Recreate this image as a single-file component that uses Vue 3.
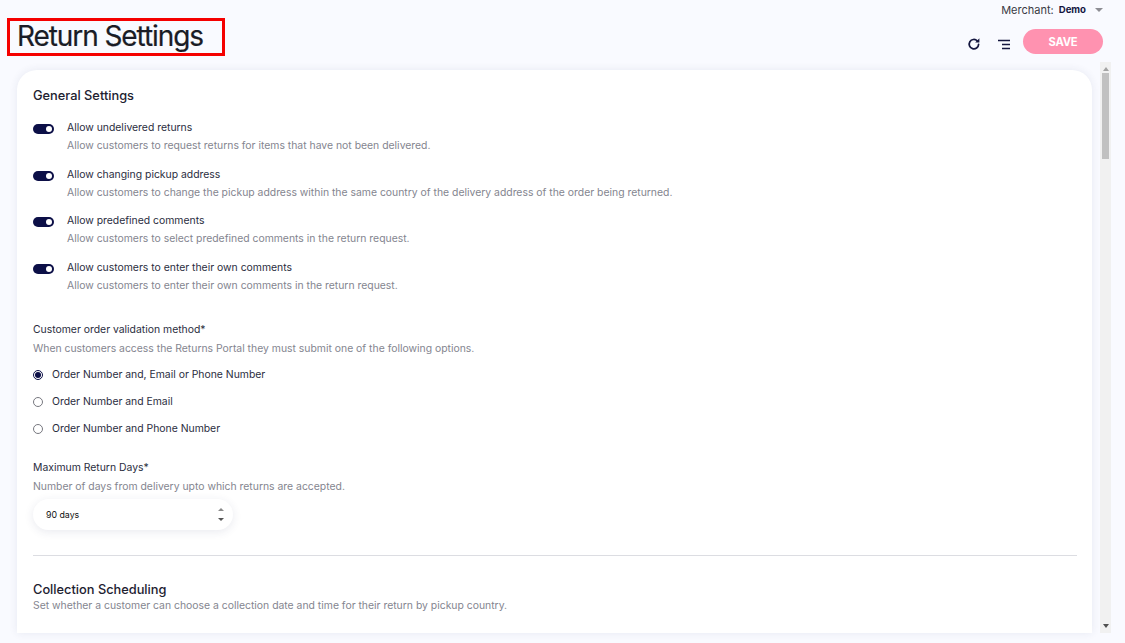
<script setup>
const toggles = [
  ['Allow undelivered returns', 'Allow customers to request returns for items that have not been delivered.'],
  ['Allow changing pickup address', 'Allow customers to change the pickup address within the same country of the delivery address of the order being returned.'],
  ['Allow predefined comments', 'Allow customers to select predefined comments in the return request.'],
  ['Allow customers to enter their own comments', 'Allow customers to enter their own comments in the return request.'],
]
const radios = [
  { label: 'Order Number and, Email or Phone Number', on: true },
  { label: 'Order Number and Email', on: false },
  { label: 'Order Number and Phone Number', on: false },
]
</script>

<template>
  <div class="page">
    <header class="top">
      <div class="title-box"><h1>Return Settings</h1></div>
      <div class="top-right">
        <div class="merchant">
          <span class="m-label">Merchant:</span>
          <span class="m-name">Demo</span>
          <span class="m-caret"></span>
        </div>
        <div class="actions">
          <svg class="ic" width="14" height="14" viewBox="0 0 14 14" fill="none">
            <path d="M11.6 7.4a4.7 4.7 0 1 1-1.4-3.6" stroke="#14163f" stroke-width="1.7" stroke-linecap="round"/>
            <path d="M12.4 1.2v4.2H8.2z" fill="#14163f"/>
          </svg>
          <svg class="menu" width="12" height="11" viewBox="0 0 12 11" fill="none">
            <path d="M0 1.5h12M4 5.5h8M4 9.5h8" stroke="#14163f" stroke-width="1.3"/>
          </svg>
          <button class="save">SAVE</button>
        </div>
      </div>
    </header>

    <div class="body">
      <main class="card">
        <h2 class="h-general">General Settings</h2>
        <div class="toggles">
          <div v-for="t in toggles" :key="t[0]" class="toggle-row">
            <span class="switch"><span class="knob"></span></span>
            <div>
              <div class="lbl">{{ t[0] }}</div>
              <div class="hint t-hint">{{ t[1] }}</div>
            </div>
          </div>
        </div>

        <div class="lbl field-a">Customer order validation method*</div>
        <div class="hint f-hint">When customers access the Returns Portal they must submit one of the following options.</div>
        <div class="radios">
          <div v-for="r in radios" :key="r.label" class="radio-row">
            <span class="radio" :class="{ on: r.on }"></span>
            <span class="lbl">{{ r.label }}</span>
          </div>
        </div>

        <div class="lbl field-b">Maximum Return Days*</div>
        <div class="hint f-hint">Number of days from delivery upto which returns are accepted.</div>
        <div class="select">
          <span>90 days</span>
          <span class="spin"><i class="up"></i><i class="down"></i></span>
        </div>

        <hr class="rule" />

        <h2 class="h-coll">Collection Scheduling</h2>
        <div class="hint">Set whether a customer can choose a collection date and time for their return by pickup country.</div>
      </main>

      <div class="scrollbar">
        <span class="arr up"></span>
        <span class="thumb"></span>
        <span class="fill"></span>
        <span class="arr down"></span>
      </div>
    </div>
  </div>
</template>

<style>
html, body { margin: 0; background: #f9faff; }
</style>

<style scoped>
.page {
  width: 1125px;
  height: 643px;
  overflow: hidden;
  background: #f9faff;
  font-family: Inter, "Liberation Sans", sans-serif;
  color: #1f2233;
  box-sizing: border-box;
}
.top {
  height: 62px;
  display: flex;
  justify-content: space-between;
  padding: 0 22px 0 7px;
  box-sizing: border-box;
}
.title-box {
  margin-top: 18px;
  width: 218px;
  height: 38px;
  border: 3px solid #f50000;
  box-sizing: border-box;
  padding: 0 0 3px 7px;
  display: flex;
  align-items: center;
}
h1 {
  margin: 0;
  font-size: 28px;
  font-weight: 400;
  letter-spacing: -1.08px;
  color: #1a1c26;
  line-height: 30px;
  -webkit-text-stroke: 0.2px #1a1c26;
}
.top-right { display: flex; flex-direction: column; align-items: flex-end; }
.merchant {
  display: flex;
  align-items: center;
  height: 20px;
  font-size: 11px;
}
.m-label { color: #3a3a44; }
.m-name { font-weight: 700; font-size: 9.6px; color: #14163f; margin-left: 5px; position: relative; top: -1px; }
.m-caret {
  width: 0; height: 0;
  margin-left: 9px;
  margin-top: -1px;
  border-left: 4px solid transparent;
  border-right: 4px solid transparent;
  border-top: 4px solid #8d8d94;
}
.actions { display: flex; align-items: center; margin-top: 9px; }
.ic { margin-top: 4px; }
.menu { margin: 6px 0 0 17px; }
.save {
  margin-left: 13px;
  width: 80px;
  height: 25px;
  border: none;
  border-radius: 13px;
  background: #ff92b0;
  color: #fff;
  font-family: inherit;
  font-size: 11.2px;
  font-weight: 700;
  letter-spacing: -0.2px;
  padding: 0;
}
.body { display: flex; height: 571px; padding-left: 17px; }
.card {
  width: 1075px;
  height: 563px;
  margin-top: 8px;
  flex: none;
  background: #fff;
  border-radius: 20px 20px 0 0;
  box-shadow: 0 0 8px rgba(40, 50, 100, 0.09);
  padding: 17px 15px 0 16px;
  box-sizing: border-box;
  overflow: hidden;
}
h2 {
  margin: 0;
  font-weight: 500;
  font-size: 12.8px;
  color: #1d2130;
  line-height: 18px;
}
.toggles { margin-top: 15px; }
.toggle-row { display: flex; height: 46.5px; }
.switch {
  width: 21px;
  height: 10px;
  margin-top: 4px;
  margin-right: 13px;
  border-radius: 5px;
  background: #0c0f47;
  position: relative;
  flex: none;
}
.knob {
  position: absolute;
  right: 2px; top: 2px;
  width: 6px; height: 6px;
  border-radius: 50%;
  background: #fff;
}
.lbl { font-size: 10.4px; line-height: 16px; color: #2a2d3e; }
.hint { font-size: 10.4px; line-height: 16px; color: #84858f; }
.t-hint { margin-top: 2px; }
.field-a { margin-top: 16px; }
.f-hint { margin-top: 3px; }
.radios { margin-top: 4px; }
.radio-row { display: flex; align-items: center; height: 27px; }
.radio {
  width: 8px; height: 8px;
  border: 1px solid #77787f;
  border-radius: 50%;
  margin: 0 9px 0 0;
  box-sizing: content-box;
  position: relative;
  flex: none;
}
.radio.on { border-color: #0c0f47; }
.radio.on::after {
  content: "";
  position: absolute;
  left: 1px; top: 1px;
  width: 6px; height: 6px;
  border-radius: 50%;
  background: #0c0f47;
}
.field-b { margin-top: 18px; }
.select {
  margin-top: 4px;
  width: 200px;
  height: 31px;
  border-radius: 16px;
  background: #fff;
  box-shadow: 0 2px 10px rgba(40, 50, 100, 0.1);
  display: flex;
  align-items: center;
  justify-content: space-between;
  padding: 0 9px 0 13px;
  box-sizing: border-box;
  font-size: 8.8px;
  color: #111;
}
.spin { display: flex; flex-direction: column; gap: 7px; }
.spin i { display: block; width: 0; height: 0; border-left: 3.5px solid transparent; border-right: 3.5px solid transparent; }
.spin .up { border-bottom: 3.5px solid #8a8a8a; }
.spin .down { border-top: 3.5px solid #555; }
.rule { border: none; border-top: 1px solid #dcdde2; margin: 25px 0 0; }
.h-coll { margin-top: 25px; line-height: 17px; }
.scrollbar {
  margin-left: 8px;
  width: 11px;
  height: 571px;
  background: #f1f1f1;
  display: flex;
  flex-direction: column;
  align-items: center;
  flex: none;
}
.arr { width: 0; height: 0; border-left: 3.5px solid transparent; border-right: 3.5px solid transparent; }
.arr.up { margin-top: 5px; border-bottom: 4px solid #a3a3a3; }
.arr.down { margin-bottom: 5px; border-top: 4px solid #505050; }
.thumb { margin-top: 2px; width: 7px; height: 86px; background: #c1c1c1; }
.fill { flex: 1; }
</style>
